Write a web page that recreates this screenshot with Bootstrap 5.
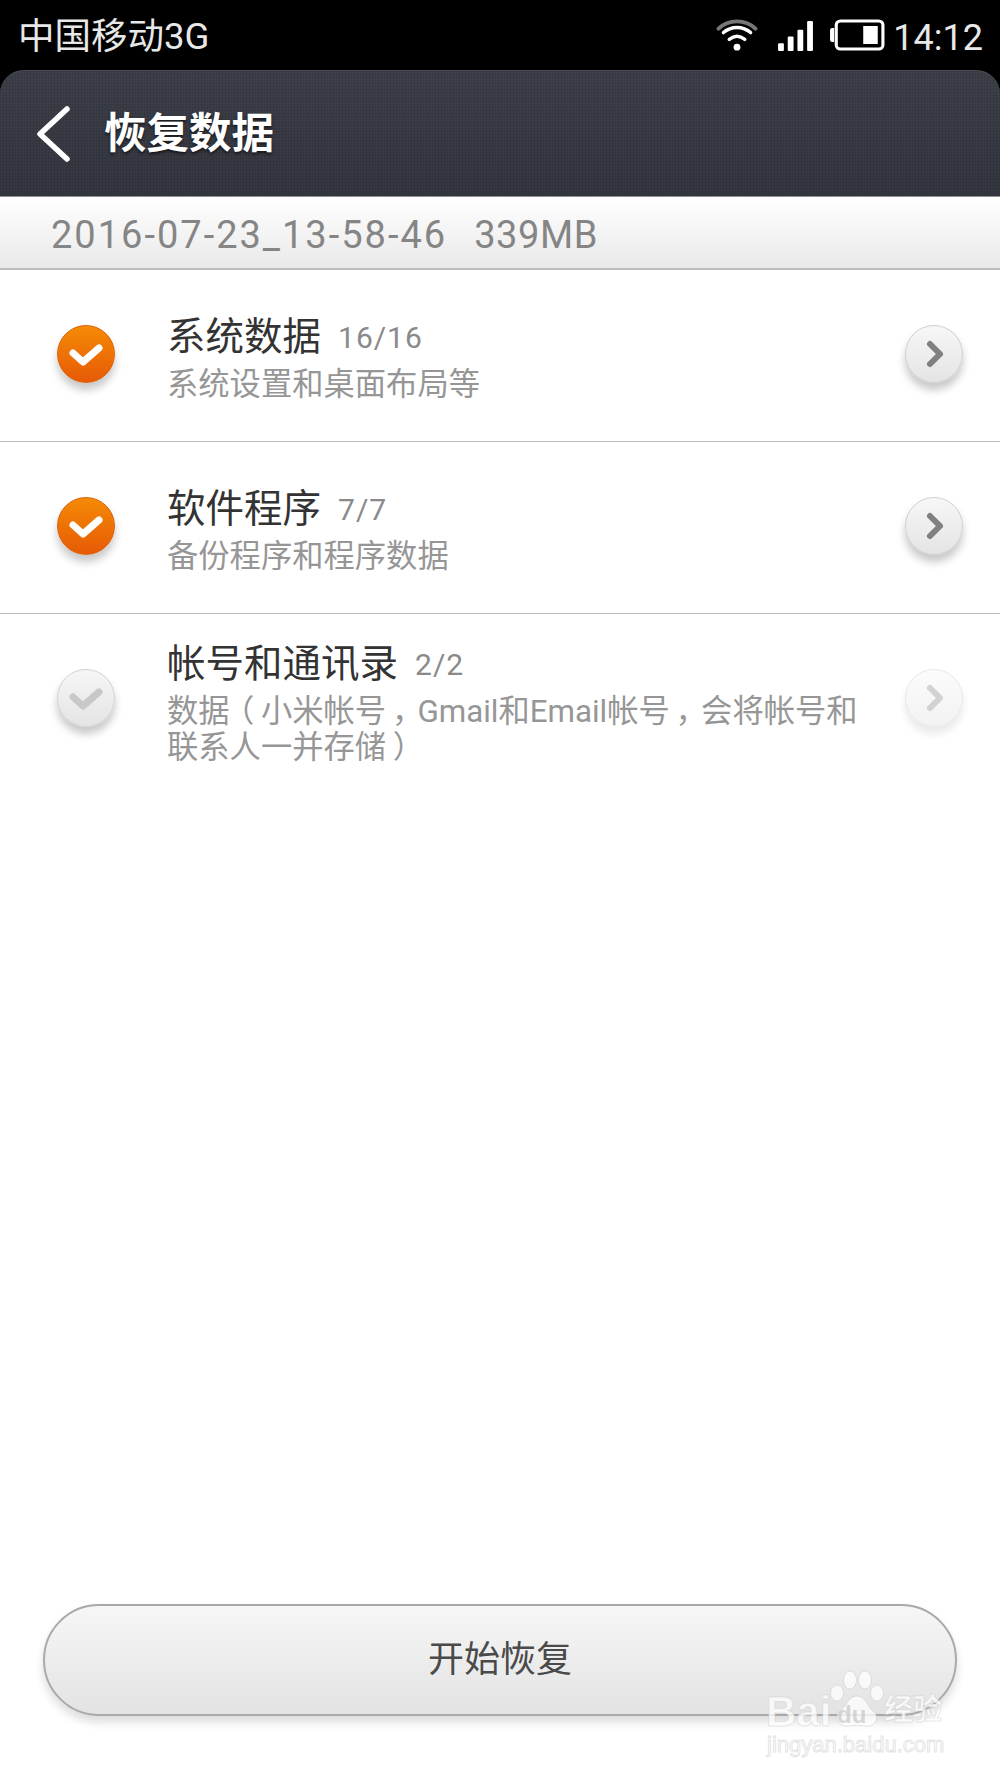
<!DOCTYPE html>
<html lang="zh-CN">
<head>
  <meta charset="UTF-8" />
  <title>恢复数据</title>
  <meta name="viewport" content="width=device-width, initial-scale=1" />
  <link href="https://cdn.jsdelivr.net/npm/bootstrap@5.3.3/dist/css/bootstrap.min.css" rel="stylesheet" />
  <style>
    html, body {
      height: 100%;
    }

    body {
      font-family: Roboto, "Noto Sans CJK SC", sans-serif;
      background-color: #fff;
      overflow: hidden;
    }

    .phone {
      position: relative;
      width: 1000px;
      height: 1778px;
    }

    .status-bar {
      height: 70px;
      background-color: #000;
      color: #e8e8e8;
      font-size: 36.5px;
      line-height: 70px;
      padding: 4px 17px 0 18px;
    }

    .status-time {
      font-size: 36px;
      margin-left: 8px;
      margin-top: 1px;
    }

    .status-icon {
      margin-bottom: 4px;
    }

    .title-wrap {
      background-color: #000;
    }

    .title-bar {
      height: 127px;
      border-radius: 24px 24px 0 0;
      border-top: 1px solid #4a4d55;
      border-bottom: 1px solid #8d8f93;
      background-color: #3a3d46;
      background-image:
        linear-gradient(rgba(0,0,0,.07) 1px, transparent 1px),
        linear-gradient(90deg, rgba(0,0,0,.07) 1px, transparent 1px),
        linear-gradient(#3d4049, #343740);
      background-size: 3px 3px, 3px 3px, 100% 100%;
      padding-left: 35px;
      color: #fff;
    }

    .title-text {
      font-size: 42.5px;
      font-weight: 700;
      margin-left: 33px;
      text-shadow: 0 2px 3px rgba(0,0,0,.6);
    }

    .backup-info {
      height: 73px;
      padding: 6px 0 0 51px;
      background: linear-gradient(#fff, #e9e9e9);
      border-bottom: 2px solid #bcbcbc;
      color: #858585;
      font-size: 38px;
      letter-spacing: 2px;
    }

    .backup-size {
      letter-spacing: .6px;
      margin-left: 27px;
    }

    .data-row {
      height: 172px;
      padding: 0 37px 0 57px;
      border: 0;
      border-bottom: 2px solid #bcbcbc;
      border-radius: 0 !important;
    }

    .row-copy {
      width: 700px;
      margin-left: 52px;
    }

    .row-name {
      font-size: 38.5px;
      line-height: 58px;
      color: #333;
    }

    .row-count {
      font-size: 30px;
      letter-spacing: 1px;
      color: #8a8a8a;
      margin-left: 17px;
      vertical-align: 2px;
    }

    .row-note {
      font-size: 31.3px;
      line-height: 36px;
      color: #969696;
    }

    /* full width punctuation sits mid-cell in the reference font */
    .punct-mid {
      display: inline-block;
      width: 1em;
      text-align: center;
      font-feature-settings: "palt";
    }

    .round-icon {
      width: 58px;
      height: 58px;
      border-radius: 50%;
      margin-bottom: 4px;
      box-shadow: 0 7px 9px rgba(0,0,0,.22);
      flex-shrink: 0;
    }

    .round-icon svg {
      display: block;
    }

    .check-on {
      background: linear-gradient(#f58a05, #e75a06);
      border: 1px solid #d9640a;
    }

    .check-off {
      background: linear-gradient(#f6f6f6, #e4e4e4);
      border: 1px solid #d2d2d2;
    }

    .arrow-btn {
      background: linear-gradient(#f7f7f7, #e4e4e4);
      border: 1px solid #cfcfcf;
    }

    .arrow-off {
      background: linear-gradient(#fcfcfc, #f2f2f2);
      border-color: #e8e8e8;
      box-shadow: 0 7px 9px rgba(0,0,0,.09);
    }

    .start-btn {
      width: 914px;
      height: 112px;
      margin: 0 0 62px 43px;
      border-radius: 56px;
      border: 2px solid #a9a9a9;
      background: linear-gradient(#f6f6f6, #e3e3e3);
      box-shadow: 0 6px 10px rgba(0,0,0,.14);
      color: #4a4a4a;
      font-size: 36px;
    }

    .watermark {
      position: absolute;
      left: 766px;
      top: 1670px;
      width: 190px;
      height: 90px;
      color: rgba(255,255,255,.75);
      pointer-events: none;
    }

    .wm-paw {
      position: absolute;
      left: 60px;
      top: 0;
    }

    .wm-bai {
      position: absolute;
      left: 0;
      top: 17px;
      font: 700 42px/50px "Liberation Sans", sans-serif;
      -webkit-text-stroke: 1px rgba(190,190,190,.35);
    }

    .wm-du {
      position: absolute;
      left: 71px;
      top: 32px;
      font: 700 24px/26px "Liberation Sans", sans-serif;
      color: rgba(190,190,190,.6);
    }

    .wm-jy {
      position: absolute;
      left: 118px;
      top: 20px;
      font-size: 29px;
      line-height: 40px;
      font-weight: 700;
      -webkit-text-stroke: 1px rgba(190,190,190,.35);
    }

    .wm-url {
      position: absolute;
      left: 1px;
      top: 62px;
      font: 400 22px/26px "Liberation Sans", sans-serif;
      color: #fff;
      -webkit-text-stroke: 1px rgba(200,200,200,.5);
    }
  </style>
</head>
<body>

  <div class="phone d-flex flex-column">

    <div class="status-bar d-flex align-items-center">
      <span class="flex-grow-1">中国移动3G</span>
      <!-- wifi -->
      <svg width="42" height="33" viewBox="0 0 42 34" class="status-icon me-3" fill="none" stroke-linecap="round">
        <path d="M2 10 C12 0 30 0 40 10" stroke="#777" stroke-width="4"/>
        <path d="M7 14 C15 7 27 7 35 14" stroke="#fff" stroke-width="3.5"/>
        <path d="M13 21 C18 17 24 17 29 21" stroke="#fff" stroke-width="3.5"/>
        <circle cx="21" cy="29" r="3.5" fill="#fff"/>
      </svg>
      <!-- signal -->
      <svg width="35" height="31" viewBox="0 0 36 32" class="status-icon ms-1 me-3" fill="#fff">
        <rect x="0" y="24" width="6" height="8" rx="1"/>
        <rect x="10" y="17" width="6" height="15" rx="1"/>
        <rect x="20" y="10" width="6" height="22" rx="1"/>
        <rect x="30" y="1" width="6" height="31" rx="1"/>
      </svg>
      <!-- battery -->
      <svg width="56" height="32" viewBox="0 0 54 32" class="status-icon" preserveAspectRatio="none">
        <path d="M5 9 H3 Q1 9 1 11 V21 Q1 23 3 23 H5 Z" fill="#fff"/>
        <rect x="7" y="2" width="45" height="28" rx="4" fill="none" stroke="#fff" stroke-width="3"/>
        <rect x="33" y="7" width="14" height="18" fill="#fff"/>
      </svg>
      <span class="status-time">14:12</span>
    </div>

    <div class="title-wrap">
      <div class="title-bar d-flex align-items-center">
        <svg width="36" height="60" viewBox="0 0 36 60" fill="none">
          <path d="M32 5 L5 30 L32 55" stroke="#fff" stroke-width="5.5" stroke-linecap="round" stroke-linejoin="round"/>
        </svg>
        <span class="title-text">恢复数据</span>
      </div>
    </div>

    <div class="backup-info d-flex align-items-center"><span>2016-07-23_13-58-46</span><span class="backup-size">339MB</span></div>

    <ul class="list-group list-group-flush">
      <li class="list-group-item data-row d-flex align-items-center">
        <span class="round-icon check-on">
          <svg width="56" height="56" viewBox="0 0 56 56" fill="none">
            <path d="M15 27 L25 36 L41 22" stroke="#fff" stroke-width="7" stroke-linecap="round" stroke-linejoin="round"/>
          </svg>
        </span>
        <div class="row-copy">
          <div class="row-name">系统数据<span class="row-count">16/16</span></div>
          <div class="row-note">系统设置和桌面布局等</div>
        </div>
        <span class="round-icon arrow-btn ms-auto">
          <svg width="56" height="56" viewBox="0 0 56 56" fill="none">
            <path d="M24 18 L34 28 L24 38" stroke="#808080" stroke-width="6" stroke-linecap="round" stroke-linejoin="round"/>
          </svg>
        </span>
      </li>
      <li class="list-group-item data-row d-flex align-items-center">
        <span class="round-icon check-on">
          <svg width="56" height="56" viewBox="0 0 56 56" fill="none">
            <path d="M15 27 L25 36 L41 22" stroke="#fff" stroke-width="7" stroke-linecap="round" stroke-linejoin="round"/>
          </svg>
        </span>
        <div class="row-copy">
          <div class="row-name">软件程序<span class="row-count">7/7</span></div>
          <div class="row-note">备份程序和程序数据</div>
        </div>
        <span class="round-icon arrow-btn ms-auto">
          <svg width="56" height="56" viewBox="0 0 56 56" fill="none">
            <path d="M24 18 L34 28 L24 38" stroke="#808080" stroke-width="6" stroke-linecap="round" stroke-linejoin="round"/>
          </svg>
        </span>
      </li>
      <li class="list-group-item data-row d-flex align-items-center">
        <span class="round-icon check-off">
          <svg width="56" height="56" viewBox="0 0 56 56" fill="none">
            <path d="M15 27 L25 36 L41 22" stroke="#c8c8c8" stroke-width="7" stroke-linecap="round" stroke-linejoin="round"/>
          </svg>
        </span>
        <div class="row-copy">
          <div class="row-name">帐号和通讯录<span class="row-count">2/2</span></div>
          <div class="row-note">数据<span class="punct-mid">（</span>小米帐号<span class="punct-mid">，</span>Gmail和Email帐号<span class="punct-mid">，</span>会将帐号和联系人一并存储<span class="punct-mid">）</span></div>
        </div>
        <span class="round-icon arrow-btn arrow-off ms-auto">
          <svg width="56" height="56" viewBox="0 0 56 56" fill="none">
            <path d="M24 18 L34 28 L24 38" stroke="#d2d2d2" stroke-width="6" stroke-linecap="round" stroke-linejoin="round"/>
          </svg>
        </span>
      </li>
    </ul>

    <div class="flex-grow-1"></div>

    <button type="button" class="btn start-btn">开始恢复</button>

    <div class="watermark">
      <svg width="60" height="60" viewBox="0 0 60 60" class="wm-paw" fill="rgba(255,255,255,.75)" stroke="rgba(190,190,190,.4)">
        <ellipse cx="11" cy="23" rx="6.5" ry="8"/>
        <ellipse cx="24" cy="10" rx="6.5" ry="9"/>
        <ellipse cx="39" cy="10" rx="6.5" ry="9"/>
        <ellipse cx="51" cy="23" rx="6.5" ry="8"/>
        <path d="M31 26 C22 26 21 36 14 41 C7 47 12 57 22 56 C27 55 35 55 40 56 C50 57 54 47 47 41 C41 36 40 26 31 26 Z"/>
      </svg>
      <span class="wm-bai">Bai</span>
      <span class="wm-du">du</span>
      <span class="wm-jy">经验</span>
      <span class="wm-url">jingyan.baidu.com</span>
    </div>

  </div>

  <script src="https://cdn.jsdelivr.net/npm/bootstrap@5.3.3/dist/js/bootstrap.bundle.min.js"></script>
</body>
</html>
